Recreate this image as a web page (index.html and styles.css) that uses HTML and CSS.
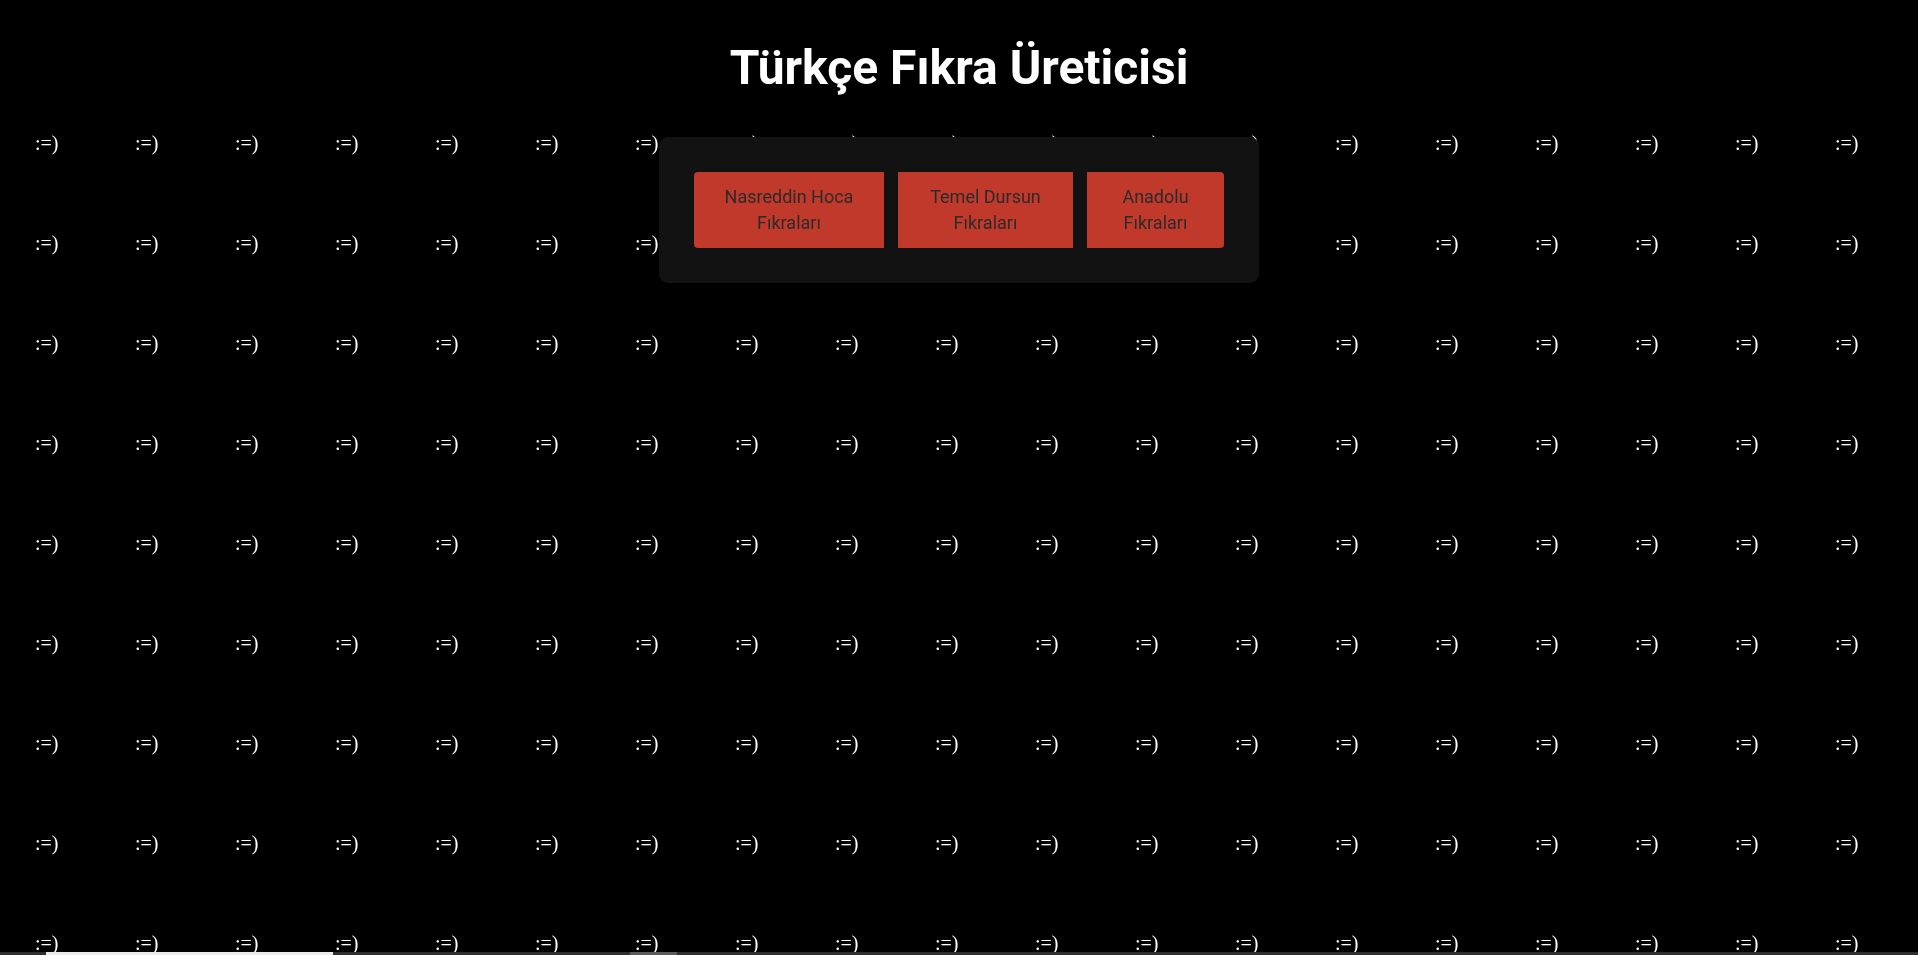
FILE: index.html
```html
<!DOCTYPE html>
<html lang="tr">
<head>
<meta charset="utf-8">
<title>Türkçe Fıkra Üreticisi</title>
<link rel="stylesheet" href="styles.css">
</head>
<body>
<div class="smileys" aria-hidden="true">
<span>:=)</span><span>:=)</span><span>:=)</span><span>:=)</span><span>:=)</span><span>:=)</span><span>:=)</span><span>:=)</span><span>:=)</span><span>:=)</span><span>:=)</span><span>:=)</span><span>:=)</span><span>:=)</span><span>:=)</span><span>:=)</span><span>:=)</span><span>:=)</span><span>:=)</span>
<span>:=)</span><span>:=)</span><span>:=)</span><span>:=)</span><span>:=)</span><span>:=)</span><span>:=)</span><span>:=)</span><span>:=)</span><span>:=)</span><span>:=)</span><span>:=)</span><span>:=)</span><span>:=)</span><span>:=)</span><span>:=)</span><span>:=)</span><span>:=)</span><span>:=)</span>
<span>:=)</span><span>:=)</span><span>:=)</span><span>:=)</span><span>:=)</span><span>:=)</span><span>:=)</span><span>:=)</span><span>:=)</span><span>:=)</span><span>:=)</span><span>:=)</span><span>:=)</span><span>:=)</span><span>:=)</span><span>:=)</span><span>:=)</span><span>:=)</span><span>:=)</span>
<span>:=)</span><span>:=)</span><span>:=)</span><span>:=)</span><span>:=)</span><span>:=)</span><span>:=)</span><span>:=)</span><span>:=)</span><span>:=)</span><span>:=)</span><span>:=)</span><span>:=)</span><span>:=)</span><span>:=)</span><span>:=)</span><span>:=)</span><span>:=)</span><span>:=)</span>
<span>:=)</span><span>:=)</span><span>:=)</span><span>:=)</span><span>:=)</span><span>:=)</span><span>:=)</span><span>:=)</span><span>:=)</span><span>:=)</span><span>:=)</span><span>:=)</span><span>:=)</span><span>:=)</span><span>:=)</span><span>:=)</span><span>:=)</span><span>:=)</span><span>:=)</span>
<span>:=)</span><span>:=)</span><span>:=)</span><span>:=)</span><span>:=)</span><span>:=)</span><span>:=)</span><span>:=)</span><span>:=)</span><span>:=)</span><span>:=)</span><span>:=)</span><span>:=)</span><span>:=)</span><span>:=)</span><span>:=)</span><span>:=)</span><span>:=)</span><span>:=)</span>
<span>:=)</span><span>:=)</span><span>:=)</span><span>:=)</span><span>:=)</span><span>:=)</span><span>:=)</span><span>:=)</span><span>:=)</span><span>:=)</span><span>:=)</span><span>:=)</span><span>:=)</span><span>:=)</span><span>:=)</span><span>:=)</span><span>:=)</span><span>:=)</span><span>:=)</span>
<span>:=)</span><span>:=)</span><span>:=)</span><span>:=)</span><span>:=)</span><span>:=)</span><span>:=)</span><span>:=)</span><span>:=)</span><span>:=)</span><span>:=)</span><span>:=)</span><span>:=)</span><span>:=)</span><span>:=)</span><span>:=)</span><span>:=)</span><span>:=)</span><span>:=)</span>
<span>:=)</span><span>:=)</span><span>:=)</span><span>:=)</span><span>:=)</span><span>:=)</span><span>:=)</span><span>:=)</span><span>:=)</span><span>:=)</span><span>:=)</span><span>:=)</span><span>:=)</span><span>:=)</span><span>:=)</span><span>:=)</span><span>:=)</span><span>:=)</span><span>:=)</span>
</div>

<main class="page">
  <h1 class="title">Türkçe Fıkra Üreticisi</h1>
  <div class="panel">
    <button class="btn btn-first btn-nasreddin">Nasreddin Hoca Fıkraları</button>
    <button class="btn btn-temel">Temel Dursun Fıkraları</button>
    <button class="btn btn-last btn-anadolu">Anadolu Fıkraları</button>
  </div>
</main>

<div class="bottom-strip" aria-hidden="true">
  <span class="strip-light"></span>
  <span class="strip-thumb"></span>
</div>
</body>
</html>
```

FILE: styles.css
```css
html, body {
  margin: 0;
  padding: 0;
  background: #000;
  height: 100%;
  overflow: hidden;
}

body {
  font-family: Roboto, "Liberation Sans", sans-serif;
  color: #fff;
}

.smileys {
  position: fixed;
  top: 0;
  left: 0;
  right: 0;
  bottom: 0;
  z-index: 0;
  overflow: hidden;
  display: grid;
  grid-template-columns: repeat(19, 100px);
  grid-auto-rows: 100px;
  padding: 132px 0 0 35px;
  font-family: "Liberation Serif", "Times New Roman", serif;
  font-size: 20px;
  line-height: 22px;
  color: #fff;
}

.smileys span {
  white-space: nowrap;
}

.page {
  position: relative;
  z-index: 1;
  display: flex;
  flex-direction: column;
  align-items: center;
  padding-top: 40px;
}

.title {
  margin: 0;
  font-family: Roboto, "Liberation Sans", sans-serif;
  font-weight: 700;
  font-size: 48px;
  line-height: 56px;
  color: #fff;
}

.panel {
  margin-top: 41px;
  width: 600px;
  box-sizing: border-box;
  padding: 35px;
  background: #121212;
  border-radius: 9px;
  display: flex;
  gap: 14px;
}

.btn {
  border: none;
  margin: 0;
  background: #c0392b;
  color: #2b2b2b;
  font-family: Roboto, "Liberation Sans", sans-serif;
  font-size: 18px;
  line-height: 26px;
  padding: 12px 10px;
  text-align: center;
  border-radius: 0;
  cursor: pointer;
}

.btn-nasreddin { flex: 0 0 190px; }
.btn-temel { flex: 0 0 175px; padding-left: 28px; padding-right: 28px; }
.btn-anadolu { flex: 0 0 137px; padding-left: 30px; padding-right: 30px; }

.btn-first { border-radius: 4px 0 0 4px; padding-left: 28px; padding-right: 28px; }
.btn-last { border-radius: 0 4px 4px 0; }

.bottom-strip {
  position: fixed;
  left: 0;
  right: 0;
  bottom: 0;
  height: 3px;
  z-index: 2;
  background: #2c302d;
  display: flex;
}

.strip-light {
  margin-left: 46px;
  width: 287px;
  background: #ececec;
}

.strip-thumb {
  margin-left: 297px;
  width: 47px;
  background: #5a5e5b;
}
```
